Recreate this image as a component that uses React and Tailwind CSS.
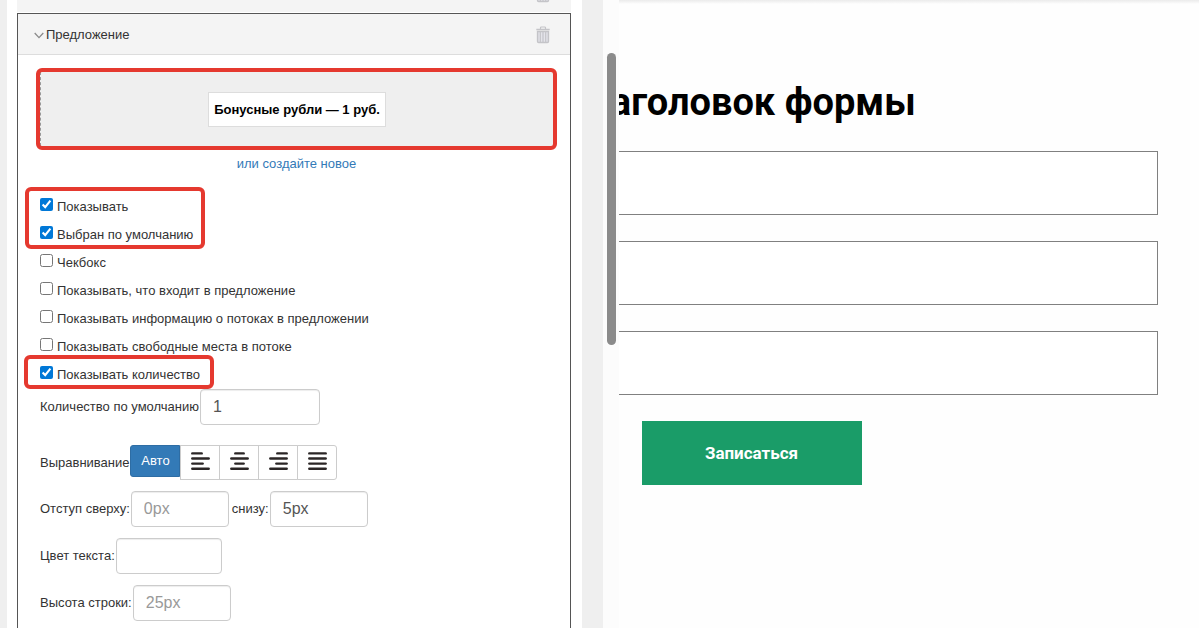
import React, { useState } from 'react';

const LINES = {
  left: [[1, 11], [1, 18], [1, 12], [1, 18]],
  center: [[5, 14], [1, 18], [5, 14], [1, 18]],
  right: [[8, 18], [1, 18], [7, 18], [1, 18]],
  justify: [[1, 18], [1, 18], [1, 18], [1, 18]],
};

const ALIGNMENTS = [
  { id: 'left', title: 'По левому краю' },
  { id: 'center', title: 'По центру' },
  { id: 'right', title: 'По правому краю' },
  { id: 'justify', title: 'По ширине' },
];

function AlignIcon({ type }) {
  return (
    <svg viewBox="0 0 19 20" className="w-[19px] h-5" stroke="#2b2626" strokeWidth="2.4" strokeLinecap="round">
      {LINES[type].map(([from, to], i) => (
        <line key={i} x1={from + 0.3} x2={to - 0.3} y1={2.4 + i * 5.1} y2={2.4 + i * 5.1} />
      ))}
    </svg>
  );
}

function TrashIcon() {
  return (
    <svg viewBox="0 0 14 18" className="w-[14px] h-[18px]" fill="none" stroke="#c4c4c8">
      <path d="M4.5 3V1.8Q4.5 1 5.3 1H8.7Q9.5 1 9.5 1.8V3" strokeWidth="1.2" />
      <path d="M0.3 3.5H13.7" strokeWidth="1.5" />
      <path d="M1.6 5.6V15.6Q1.6 16.6 2.6 16.6H11.4Q12.4 16.6 12.4 15.6V5.6Z" strokeWidth="1.5" fill="#e4e4ea" />
      <path d="M4.3 6V16M7 6V16M9.7 6V16" strokeWidth="1.2" />
    </svg>
  );
}

function Check({ id, label, checked, onChange }) {
  return (
    <div className="flex h-5 items-start gap-1">
      <input
        type="checkbox"
        id={id}
        checked={checked}
        onChange={() => onChange(id)}
        className="w-[13px] h-[13px] mt-px accent-[#0078d7]"
      />
      <label htmlFor={id}>{label}</label>
    </div>
  );
}

function Field({ id, label, width, ...rest }) {
  return (
    <div className="flex items-center gap-px">
      <label htmlFor={id}>{label}</label>
      <input
        id={id}
        type="text"
        className={`${width} h-9 px-3 pb-px rounded border border-[#ccc] bg-white text-base text-[#555] placeholder:text-[#999] shadow-[inset_0_1px_1px_rgba(0,0,0,0.075)] outline-none focus:border-[#66afe9]`}
        {...rest}
      />
    </div>
  );
}

// Red marker frame laid over a group of options
function Marker({ className }) {
  return <div className={`absolute pointer-events-none border-4 border-[#e5392f] rounded-md ${className}`} />;
}

function OfferSettings() {
  const [align, setAlign] = useState('auto');
  const [options, setOptions] = useState({ show: true, selected: true, quantity: true });
  const toggle = (id) => setOptions((o) => ({ ...o, [id]: !o[id] }));
  const option = (id, label) => <Check id={id} label={label} checked={!!options[id]} onChange={toggle} />;

  return (
    <section className="border border-[#555] bg-white">
      <header className="flex items-center justify-between h-[41px] pt-px pl-4 pr-5 bg-[#f4f4f4] border-b border-[#ddd]">
        <h3 className="flex items-center gap-[2px]">
          <svg viewBox="0 0 10 7" className="w-[10px] h-[7px] mt-px" fill="none" stroke="#8a8a8a" strokeWidth="1.3">
            <path d="M0.7 1L5 5.6L9.3 1" />
          </svg>
          Предложение
        </h3>
        <button type="button" aria-label="Удалить"><TrashIcon /></button>
      </header>

      <div className="pl-[22px] pr-[17px] pt-[17px] pb-6">
        <div className="relative flex items-center justify-center h-[74px] bg-[#efefef] border-l border-dashed border-[#999]">
          <span className="px-[5px] pt-[7px] pb-[6px] bg-white border border-[#ddd] font-bold text-black">
            Бонусные рубли — 1 руб.
          </span>
          <Marker className="-inset-1 -left-[5px]" />
        </div>
        <p className="mt-2 text-center">
          <a href="#new" className="text-[#337ab7] hover:underline">или создайте новое</a>
        </p>

        <div className="flex flex-col items-start gap-2 mt-[23px]">
          <div className="relative flex flex-col gap-2">
            {option('show', 'Показывать')}
            {option('selected', 'Выбран по умолчанию')}
            <Marker className="-left-[15px] -right-3 -top-[10px] -bottom-1" />
          </div>
          {option('checkbox', 'Чекбокс')}
          {option('contents', 'Показывать, что входит в предложение')}
          {option('streams', 'Показывать информацию о потоках в предложении')}
          {option('places', 'Показывать свободные места в потоке')}
          <div className="relative">
            {option('quantity', 'Показывать количество')}
            <Marker className="-left-4 -right-[14px] -top-[10px] -bottom-1" />
          </div>
        </div>

        <div className="mt-1">
          <Field id="default-quantity" label="Количество по умолчанию" width="w-[120px]" defaultValue="1" />
        </div>

        <div className="flex items-center gap-px mt-5">
          <span>Выравнивание</span>
          <div className="flex items-start">
            <button
              type="button"
              onClick={() => setAlign('auto')}
              className={`w-[50px] h-8 pb-px rounded-l-[3px] border ${align === 'auto' ? 'bg-[#337ab7] border-[#2e6da4] text-white' : 'bg-white border-[#ccc]'}`}
            >
              Авто
            </button>
            <div className="flex -space-x-px">
              {ALIGNMENTS.map(({ id, title }) => (
                <button
                  key={id}
                  type="button"
                  title={title}
                  onClick={() => setAlign(id)}
                  className={`flex justify-center w-10 h-[35px] pt-[5px] border border-[#ccc] last:rounded-r-[3px] ${align === id ? 'bg-[#e6e6e6]' : 'bg-white'}`}
                >
                  <AlignIcon type={id} />
                </button>
              ))}
            </div>
          </div>
        </div>

        <div className="flex flex-col gap-[11px] mt-[11px]">
          <div className="flex gap-[3px]">
            <Field id="margin-top" label="Отступ сверху:" width="w-[98px]" placeholder="0px" />
            <Field id="margin-bottom" label="снизу:" width="w-[98px]" defaultValue="5px" />
          </div>
          <Field id="text-color" label="Цвет текста:" width="w-[106px]" />
          <Field id="line-height" label="Высота строки:" width="w-[98px]" placeholder="25px" />
        </div>
      </div>
    </section>
  );
}

function FormPreview() {
  return (
    <main className="flex-1 min-w-0 overflow-hidden bg-[#fefefe] font-[Roboto,sans-serif]">
      <div className="h-1 bg-linear-to-b from-[#ebebeb] to-[#fefefe]" />
      {/* the form is wider than the visible part and slides under the editor */}
      <form onSubmit={(e) => e.preventDefault()} className="flex flex-col items-center gap-[26px] -ml-[274px] mr-[41px] pt-[75px]">
        <h1 className="text-[38px] leading-[46px] font-bold text-black">Заголовок формы</h1>
        <input type="text" aria-label="Имя" className="w-full h-16 px-5 border border-[#808080] bg-white" />
        <input type="text" aria-label="Email" className="w-full h-16 px-5 border border-[#808080] bg-white" />
        <input type="text" aria-label="Телефон" className="w-full h-16 px-5 border border-[#808080] bg-white" />
        <button type="submit" className="w-[220px] h-16 bg-[#1a9c68] text-white text-[17px] font-bold">
          Записаться
        </button>
      </form>
    </main>
  );
}

export default function App() {
  return (
    <div className="flex h-screen overflow-hidden bg-[#efefef] text-[13px] leading-5 text-[#333] font-['Liberation_Sans',Arial,sans-serif]">
      <aside className="shrink-0 w-[575px] ml-[7px] pl-[10px] pr-[11px] bg-white">
        <div className="flex items-end justify-end h-3 mb-px pr-[21px] pb-[9px] bg-[#f4f4f4]">
          <button type="button" aria-label="Удалить"><TrashIcon /></button>
        </div>
        <OfferSettings />
      </aside>
      <div className="shrink-0 w-4 ml-[21px] pl-1 pt-[53px] bg-[#fcfcfc]">
        <div className="w-[9px] h-[292px] rounded-full bg-[#8b8b8b]" />
      </div>
      <FormPreview />
    </div>
  );
}
